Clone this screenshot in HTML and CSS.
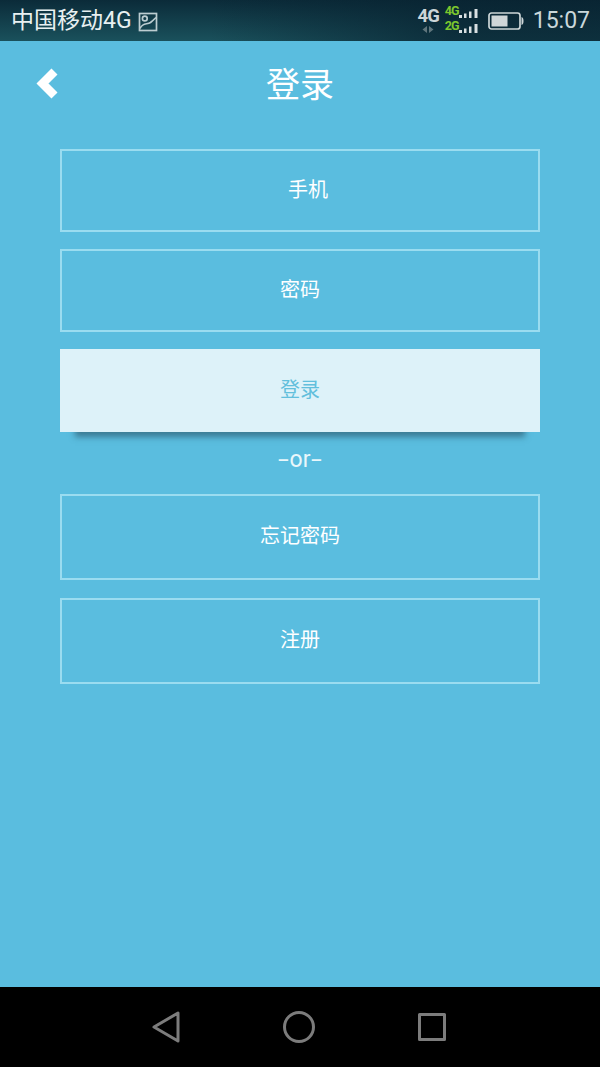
FILE: index.html
```html
<!DOCTYPE html>
<html lang="zh">
<head>
<meta charset="utf-8">
<title>登录</title>
<link rel="stylesheet" href="styles.css">
</head>
<body>
<div class="screen">
  <header class="status">
    <div class="status-left">
      <span class="carrier">中国移动4G</span>
      <svg class="pic" width="20" height="20" viewBox="0 0 20 20" fill="none" stroke="#bccdd1" stroke-width="1.7"><rect x="1.500" y="1.500" width="17" height="17"/><circle cx="6.800" cy="6.500" r="2.400"/><path d="M2 16.500 C5 10 9 13 12.500 10.500 C15 8.500 16.500 7 18 5.500"/></svg>
    </div>
    <div class="status-right">
      <div class="net">
        <span class="net-label">4G</span>
        <svg class="net-arrows" width="12" height="7" viewBox="0 0 12 7" fill="#5f757c"><path d="M5 0v7L0.500 3.500zM7 0v7l4.500-3.500z"/></svg>
      </div>
      <div class="signal">
        <div class="sig-row">
          <span class="sig-label">4G</span>
          <svg width="19" height="9" viewBox="0 0 19 9" fill="#d9e0e2"><rect x="0" y="6" width="3" height="3"/><rect x="5" y="4.500" width="2.500" height="4.500"/><rect x="10" y="2.500" width="2.500" height="6.500"/><rect x="15.500" y="0" width="3" height="9"/></svg>
        </div>
        <div class="sig-row">
          <span class="sig-label">2G</span>
          <svg width="19" height="9" viewBox="0 0 19 9" fill="#d9e0e2"><rect x="0" y="6" width="3" height="3"/><rect x="5" y="4.500" width="2.500" height="4.500"/><rect x="10" y="2.500" width="2.500" height="6.500"/><rect x="15.500" y="0" width="3" height="9"/></svg>
        </div>
      </div>
      <svg class="battery" width="36" height="18" viewBox="0 0 36 18" fill="none"><rect x="1" y="1" width="31" height="16" rx="2.500" stroke="#cdd6d8" stroke-width="1.700"/><rect x="3.500" y="3.500" width="16" height="11" fill="#cfd6d8"/><path d="M33.500 5 q2 .5 2 4 t-2 4z" fill="#cdd6d8"/></svg>
      <span class="clock">15:07</span>
    </div>
  </header>

  <main class="page">
    <div class="topbar">
      <svg class="back" width="24" height="34" viewBox="0 0 24 34" fill="none" stroke="#fff" stroke-width="8.500" stroke-linejoin="miter"><path d="M18.500 4.500 L6.500 16.500 L18.500 28.500"/></svg>
      <h1 class="title">登录</h1>
    </div>
    <div class="form">
      <div class="field phone">手机</div>
      <div class="field">密码</div>
      <div class="field primary">登录</div>
      <div class="or"><span class="dash">-</span>or<span class="dash">-</span></div>
      <div class="field tall">忘记密码</div>
      <div class="field tall">注册</div>
    </div>
  </main>

  <footer class="navbar">
    <svg width="30" height="34" viewBox="0 0 30 34" fill="none" stroke="#7c7c7c" stroke-width="3" stroke-linejoin="round"><path d="M27 3 V31 L3 17 Z"/></svg>
    <svg width="32" height="32" viewBox="0 0 32 32" fill="none" stroke="#7c7c7c" stroke-width="3"><circle cx="16" cy="16" r="14.500"/></svg>
    <svg class="nav-square" width="28" height="28" viewBox="0 0 28 28" fill="none" stroke="#7c7c7c" stroke-width="3" stroke-linejoin="round"><rect x="1.500" y="1.500" width="25" height="25"/></svg>
  </footer>
</div>
</body>
</html>
```
FILE: styles.css
```css
* { box-sizing: border-box; }
html, body { margin: 0; padding: 0; }
body {
  font-family: "Noto Sans CJK SC", "Liberation Sans", sans-serif;
  background: #5abddf;
}
.screen {
  width: 600px;
  height: 1067px;
  display: flex;
  flex-direction: column;
  overflow: hidden;
}
.status {
  height: 41px;
  flex: none;
  display: flex;
  justify-content: space-between;
  align-items: center;
  padding: 0 10px 0 11px;
  background:
    linear-gradient(to right, rgba(8, 34, 48, 0) 35%, rgba(8, 34, 48, 0.7) 75%),
    linear-gradient(to bottom, #0b2b39 0%, #1a515c 100%);
  color: #e4eced;
}
.status-left { display: flex; align-items: center; gap: 6px; }
.carrier {
  font-family: "Roboto", "Noto Sans CJK SC", sans-serif;
  font-size: 23px;
  line-height: 41px;
  color: #e8f0f1;
}
.pic { display: block; margin-top: 2px; }
.status-right { display: flex; align-items: center; }
.net {
  display: flex;
  flex-direction: column;
  align-items: center;
  width: 21px;
  margin-right: 6px;
  margin-top: -1px;
}
.net-label {
  font-family: "Roboto", sans-serif;
  font-weight: 700;
  font-size: 18.500px;
  letter-spacing: -1px;
  line-height: 18px;
  color: #ccd5d8;
}
.net-arrows { display: block; margin-top: 1px; }
.signal {
  display: flex;
  flex-direction: column;
  width: 34px;
  margin: -6px 9px 0 0;
}
.sig-row { display: flex; align-items: flex-end; height: 15px; }
.sig-label {
  font-family: "Roboto", sans-serif;
  font-weight: 700;
  font-size: 12.500px;
  letter-spacing: -0.800px;
  line-height: 13px;
  color: #7cc72e;
  width: 14px;
  flex: none;
  align-self: flex-start;
  margin-top: 1px;
}
.battery { display: block; margin-right: 9px; }
.clock {
  font-family: "Roboto", sans-serif;
  font-size: 23px;
  line-height: 41px;
  color: #c9d7da;
}
.page {
  flex: 1;
  background: #5abddf;
  display: flex;
  flex-direction: column;
}
.topbar {
  height: 108px;
  flex: none;
  display: grid;
  grid-template-columns: 1fr auto 1fr;
  align-items: start;
}
.back { margin: 26px 0 0 36px; display: block; }
.title {
  margin: 0;
  font-size: 34px;
  font-weight: 400;
  line-height: 46px;
  padding-top: 19px;
  color: #fff;
}
.form {
  padding: 0 60px;
  display: flex;
  flex-direction: column;
  gap: 17px;
}
.field {
  height: 83px;
  border: 2px solid #9adcf0;
  display: flex;
  align-items: center;
  justify-content: center;
  color: #fff;
  font-size: 20px;
  padding-bottom: 4px;
}
.phone { padding-left: 16px; }
.primary {
  background: #ddf2f9;
  border: 0;
  color: #62bfdc;
  box-shadow: 0 20px 6px -15px rgba(30, 60, 75, 0.5);
}
.or {
  height: 28px;
  margin: -1px 0 1px;
  display: flex;
  justify-content: center;
  font-family: "Roboto", sans-serif;
  font-size: 23px;
  line-height: 24px;
  color: #e9f7fb;
}
.dash {
  display: block;
  width: 13px;
  text-align: center;
  transform: scaleX(1.700);
}
.tall { height: 86px; padding-bottom: 6px; }
.tall + .tall { margin-top: 1px; }
.navbar {
  height: 80px;
  flex: none;
  background: #000;
  display: flex;
  align-items: center;
  justify-content: center;
  gap: 102px;
  padding-right: 3px;
}
.nav-square { margin-left: 1px; }
```
